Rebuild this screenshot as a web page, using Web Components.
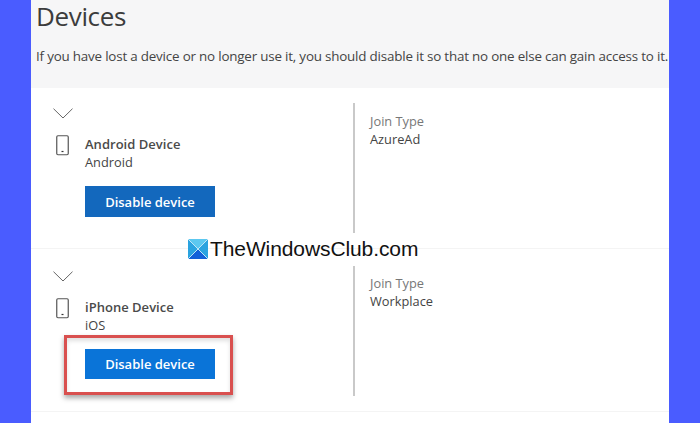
<!DOCTYPE html>
<html><head><meta charset="utf-8"><style>
html,body{margin:0;padding:0;height:423px;overflow:hidden;background:#4a5cff}
body{font-family:"Open Sans","Noto Sans",sans-serif}
</style></head><body>
<device-page>
<device-row name="Android Device" os="Android" join="AzureAd" first></device-row>
<device-row name="iPhone Device" os="iOS" join="Workplace" highlight></device-row>
</device-page>
<script>
class DevicePage extends HTMLElement{constructor(){super();this.attachShadow({mode:'open'}).innerHTML=`<style>
:host{display:block;height:423px;padding:0 31px;box-sizing:border-box;position:relative;overflow:hidden}
.sheet{background:#fff;height:423px;overflow:hidden}
header{background:#f6f6f7;height:88px;box-sizing:border-box;padding:0 0 0 5px}
h1{margin:0;font:400 26px/32px "Open Sans",sans-serif;color:#3c3c3c;letter-spacing:-.35px}
p{margin:15px 0 0;font:400 13.4px/18px "Open Sans",sans-serif;color:#444;white-space:nowrap;letter-spacing:-.195px}
.mark{position:absolute;left:188px;top:238px;display:flex;align-items:center;gap:2px;font:400 21px/22px "Liberation Sans",sans-serif;color:#111;letter-spacing:-.1px}
.mark svg{display:block}
</style><div class="sheet"><header><h1>Devices</h1><p>If you have lost a device or no longer use it, you should disable it so that no one else can gain access to it.</p></header><slot></slot></div>
<div class="mark"><svg width="20" height="20" viewBox="0 0 20 20"><rect width="20" height="20" fill="#2aa3e0"/><path d="M0 0L10 10L20 0Z" fill="#5cc8f0"/><path d="M0 20L10 10L20 20Z" fill="#1260d8"/><path d="M0 0L20 20M20 0L0 20" stroke="#bfe6f7" stroke-width="1"/></svg><span>TheWindowsClub.com</span></div>`}}
customElements.define('device-page',DevicePage);
class PhoneIcon extends HTMLElement{constructor(){super();this.attachShadow({mode:'open'}).innerHTML=`<style>:host{display:block;width:14px;height:21px}svg{display:block}</style><svg width="14" height="21" viewBox="0 0 14 21" fill="none"><rect x=".75" y=".75" width="11.5" height="19" rx="1.2" stroke="#555" stroke-width="1.2"/><path d="M5.5 16.5h2" stroke="#333" stroke-width="1.2"/></svg>`}}
customElements.define('phone-icon',PhoneIcon);
class DeviceRow extends HTMLElement{constructor(){super();const a=n=>this.getAttribute(n)||'';this.attachShadow({mode:'open'}).innerHTML=`<style>
:host{display:grid;grid-template-columns:322px 1fr;height:163px;box-sizing:border-box;padding-top:17px;border-bottom:1px solid #f4f4f4;color:#444;font:400 12.8px/18px "Open Sans",sans-serif}
:host([first]){height:161px;padding-top:15px}
.left{padding:5px 0 0 22px;box-sizing:border-box}
.chev{display:block;margin-bottom:16px}
.dev{display:flex;gap:15px;margin-left:3px}
.txt b{display:block;font-weight:600;font-size:13px;letter-spacing:.02px;color:#4a4a4a}
.txt span{display:block}
button{display:block;width:130px;height:31px;margin:15px 0 0;padding:1px 0 0;border:0;border-radius:0;background:#1368bd;color:#fff;font:600 13px/30px "Open Sans",sans-serif}
:host([highlight]) button{background:#0a74d8;height:30px;padding:0}
.wrap{position:relative;width:130px;margin-left:32px}
:host([highlight]) .wrap::after{content:"";position:absolute;left:-21px;top:-14px;width:169px;height:60px;box-sizing:border-box;border:3px solid #d9504f;box-shadow:0 3px 5px rgba(0,0,0,.35),inset 0 3px 4px rgba(0,0,0,.12);pointer-events:none}
.right{border-left:2px solid #c9c9c9;height:130px;padding:8px 0 0 15px;box-sizing:border-box}
:host([first]) .right{padding-top:9px}
.right i{display:block;font-style:normal;color:#777}
.right u{display:block;text-decoration:none;color:#444}
</style><div class="left"><svg class="chev" width="20" height="11" viewBox="0 0 20 11" fill="none"><path d="M.5 .7L10 10L19.5 .7" stroke="#666" stroke-width="1"/></svg><div class="dev"><phone-icon></phone-icon><div class="txt"><b>${a('name')}</b><span>${a('os')}</span></div></div><div class="wrap"><button>Disable device</button></div></div><div class="right"><i>Join Type</i><u>${a('join')}</u></div>`}}
customElements.define('device-row',DeviceRow);
</script></body></html>
